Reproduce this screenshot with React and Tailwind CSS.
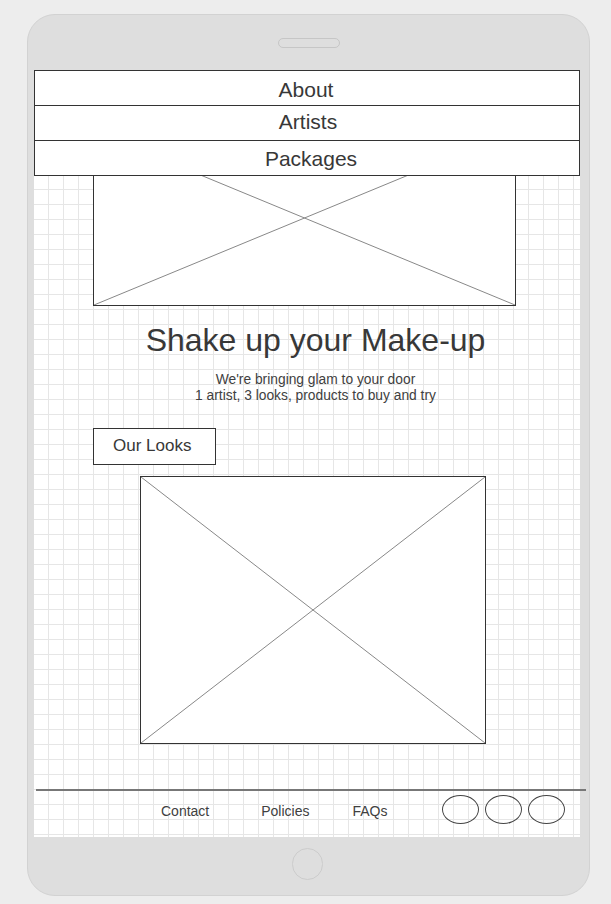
import React from 'react';

const navItems = [
  { label: 'About', cls: 'pr-[2px] pt-[4px]' },
  { label: 'Artists', cls: 'pl-[2px] pb-[3px]' },
  { label: 'Packages', cls: 'pl-[8px] pt-[1px]' },
];

function Placeholder({ w, h }) {
  return (
    <div className="relative border border-[#333] bg-white" style={{ width: w, height: h }}>
      <svg className="absolute inset-0 h-full w-full" viewBox="0 0 100 100" preserveAspectRatio="none">
        <line x1="0" y1="0" x2="100" y2="100" stroke="#888" strokeWidth="1" vectorEffect="non-scaling-stroke" />
        <line x1="100" y1="0" x2="0" y2="100" stroke="#888" strokeWidth="1" vectorEffect="non-scaling-stroke" />
      </svg>
    </div>
  );
}

function App() {
  return (
    <div className="w-[611px] h-[904px] bg-[#ededed] pt-[14px] pl-[27px] font-['Liberation_Sans',Arial,sans-serif] text-[#383838]">
      <div className="w-[563px] h-[882px] rounded-[28px] bg-[#dedede] border border-[#d2d2d2] flex flex-col items-start pl-[6px]">
        {/* speaker */}
        <div className="ml-[244px] mt-[23px] w-[62px] h-[10px] rounded-full border border-[#c6c6c6]" />

        {/* screen */}
        <div className="relative mt-[22px] w-[546px] h-[767px] bg-white bg-[linear-gradient(to_right,#e6e6e6_1px,transparent_1px),linear-gradient(to_bottom,#e6e6e6_1px,transparent_1px)] bg-[size:15px_15px] bg-[position:14px_14px]">
          <div className="flex flex-col items-start pt-[60px]">
            <div className="ml-[59px]">
              <Placeholder w={423} h={176} />
            </div>

            <div className="w-full pl-[17px] mt-[16px] flex flex-col items-center">
              <h1 className="text-[32px] leading-[37px] font-normal">Shake up your Make-up</h1>
              <p className="mt-[13px] text-[13.8px] leading-[16px] text-center text-[#404040]">
                We're bringing glam to your door
                <br />
                1 artist, 3 looks, products to buy and try
              </p>
            </div>

            <button className="ml-[59px] mt-[24px] w-[123px] h-[37px] border border-[#333] bg-white text-[17px] text-left pl-[19px] pb-[2px]">
              Our Looks
            </button>

            <div className="ml-[106px] mt-[11px]">
              <Placeholder w={346} h={268} />
            </div>

            <div className="ml-[2px] mt-[45px] w-[550px] h-[2px] bg-[#777]" />

            <div className="flex items-center h-[34px] pl-[127px] text-[14px] text-[#404040]">
              <a className="pt-[6px]">Contact</a>
              <a className="ml-[52px] pt-[6px]">Policies</a>
              <a className="ml-[43px] pt-[6px]">FAQs</a>
              <div className="ml-[54px] flex gap-[6px] pt-[2px]">
                <span className="w-[37px] h-[29px] rounded-[50%] border border-[#444]" />
                <span className="w-[37px] h-[29px] rounded-[50%] border border-[#444]" />
                <span className="w-[37px] h-[29px] rounded-[50%] border border-[#444]" />
              </div>
            </div>
          </div>

          {/* dropdown nav over content */}
          <nav className="absolute top-0 left-0 w-[546px]">
            {navItems.map((item, i) => (
              <div
                key={item.label}
                className={
                  'flex items-center justify-center bg-white border-x border-t border-[#333] text-[21px] ' +
                  (i === navItems.length - 1 ? 'h-[36px] border-b ' : 'h-[35px] ') +
                  item.cls
                }
              >
                {item.label}
              </div>
            ))}
          </nav>
        </div>

        {/* home button */}
        <div className="ml-[258px] mt-[11px] w-[31px] h-[32px] rounded-full border border-[#cccccc]" />
      </div>
    </div>
  );
}

export default App;
